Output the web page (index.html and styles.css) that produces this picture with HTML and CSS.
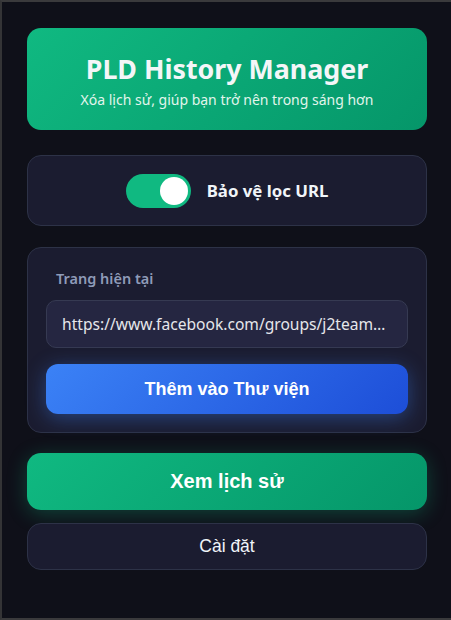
FILE: index.html
```html
<!DOCTYPE html>
<html lang="vi">
<head>
  <meta charset="UTF-8" />
  <meta name="viewport" content="width=device-width, initial-scale=1.0"/>
  <title>PLD History Manager</title>
  <link rel="stylesheet" href="styles.css">
</head>
<body>
  <div class="popup">
    <div class="header">
      <h1>PLD History Manager</h1>
      <p>Xóa lịch sử, giúp bạn trở nên trong sáng hơn</p>
    </div>

    <div class="card toggle-card">
      <label class="switch">
        <input type="checkbox" id="protectToggle" checked>
        <span class="slider"></span>
      </label>
      <span class="toggle-label">Bảo vệ lọc URL</span>
    </div>

    <div class="card current-card">
      <div class="section-label">Trang hiện tại</div>
      <div class="url-box" id="currentUrl">https://www.facebook.com/groups/j2teamcommunity/posts/1234567890</div>
      <button class="btn-blue" id="addBtn">Thêm vào Thư viện</button>
    </div>

    <button class="btn-green" id="historyBtn">Xem lịch sử</button>
    <button class="btn-dark" id="settingsBtn">Cài đặt</button>
  </div>
</body>
</html>
```

FILE: styles.css
```css
* {
    margin: 0;
    padding: 0;
    box-sizing: border-box;
}
html, body {
    height: 100%;
}
body {
    background: #0f1019;
    font-family: 'Noto Sans', 'Open Sans', sans-serif;
    color: #f1f5f9;
    border-top: 2px solid #3a3a3c;
    border-left: 2px solid #343436;
    border-bottom: 2px solid #3a3a3c;
}
.popup {
    display: flex;
    flex-direction: column;
    padding: 26px 24px 0 25px;
}
.header {
    background: linear-gradient(135deg, #10b981, #059669);
    border-radius: 14px;
    height: 102px;
    text-align: center;
    padding-top: 24px;
    margin-bottom: 25px;
}
.header h1 {
    font-size: 26.8px;
    font-weight: 700;
    color: #f4f6f8;
    line-height: 34px;
}
.header p {
    font-size: 14px;
    color: #e2f5ec;
    margin-top: 4px;
}
.card {
    background: #1b1c30;
    border: 1px solid #2d3247;
    border-radius: 14px;
}
.toggle-card {
    height: 71px;
    display: flex;
    align-items: center;
    justify-content: center;
    gap: 16px;
    margin-bottom: 21px;
}
.switch {
    position: relative;
    width: 65px;
    height: 34px;
    display: inline-block;
}
.switch input {
    display: none;
}
.slider {
    position: absolute;
    inset: 0;
    background: #10b981;
    border-radius: 17px;
    cursor: pointer;
}
.slider::before {
    content: "";
    position: absolute;
    width: 28px;
    height: 28px;
    border-radius: 50%;
    background: #fff;
    top: 3px;
    left: 3px;
}
.switch input:checked + .slider::before {
    left: 34px;
}
.toggle-label {
    font-size: 16.8px;
    font-weight: 700;
    color: #f1f5f9;
}
.current-card {
    padding: 18px;
    margin-bottom: 20px;
}
.section-label {
    font-size: 14.5px;
    font-weight: 600;
    color: #8f9bb8;
    padding-left: 10px;
    margin-bottom: 12px;
    margin-top: 2px;
}
.url-box {
    background: #252641;
    border: 1px solid #363a52;
    border-radius: 10px;
    height: 48px;
    line-height: 46px;
    padding: 0 15px;
    font-size: 15.6px;
    color: #e5e7eb;
    white-space: nowrap;
    overflow: hidden;
    text-overflow: ellipsis;
    margin-bottom: 16px;
}
button {
    font-family: 'Liberation Sans', Arial, sans-serif;
    border: none;
    cursor: pointer;
    width: 100%;
}
.btn-blue {
    height: 50px;
    border-radius: 12px;
    background: linear-gradient(135deg, #3b82f6, #1d4ed8);
    color: #fff;
    font-size: 18px;
    font-weight: 700;
    box-shadow: 0 4px 20px rgba(59, 130, 246, 0.4);
}
.btn-green {
    height: 57px;
    border-radius: 14px;
    background: linear-gradient(135deg, #10b981, #059669);
    color: #fff;
    font-size: 20px;
    font-weight: 700;
    box-shadow: 0 4px 20px rgba(16, 185, 129, 0.3);
    margin-bottom: 13px;
}
.btn-dark {
    height: 47px;
    border-radius: 14px;
    background: #1b1c30;
    border: 1px solid #2d3247;
    color: #f1f5f9;
    font-size: 17.5px;
}
```
